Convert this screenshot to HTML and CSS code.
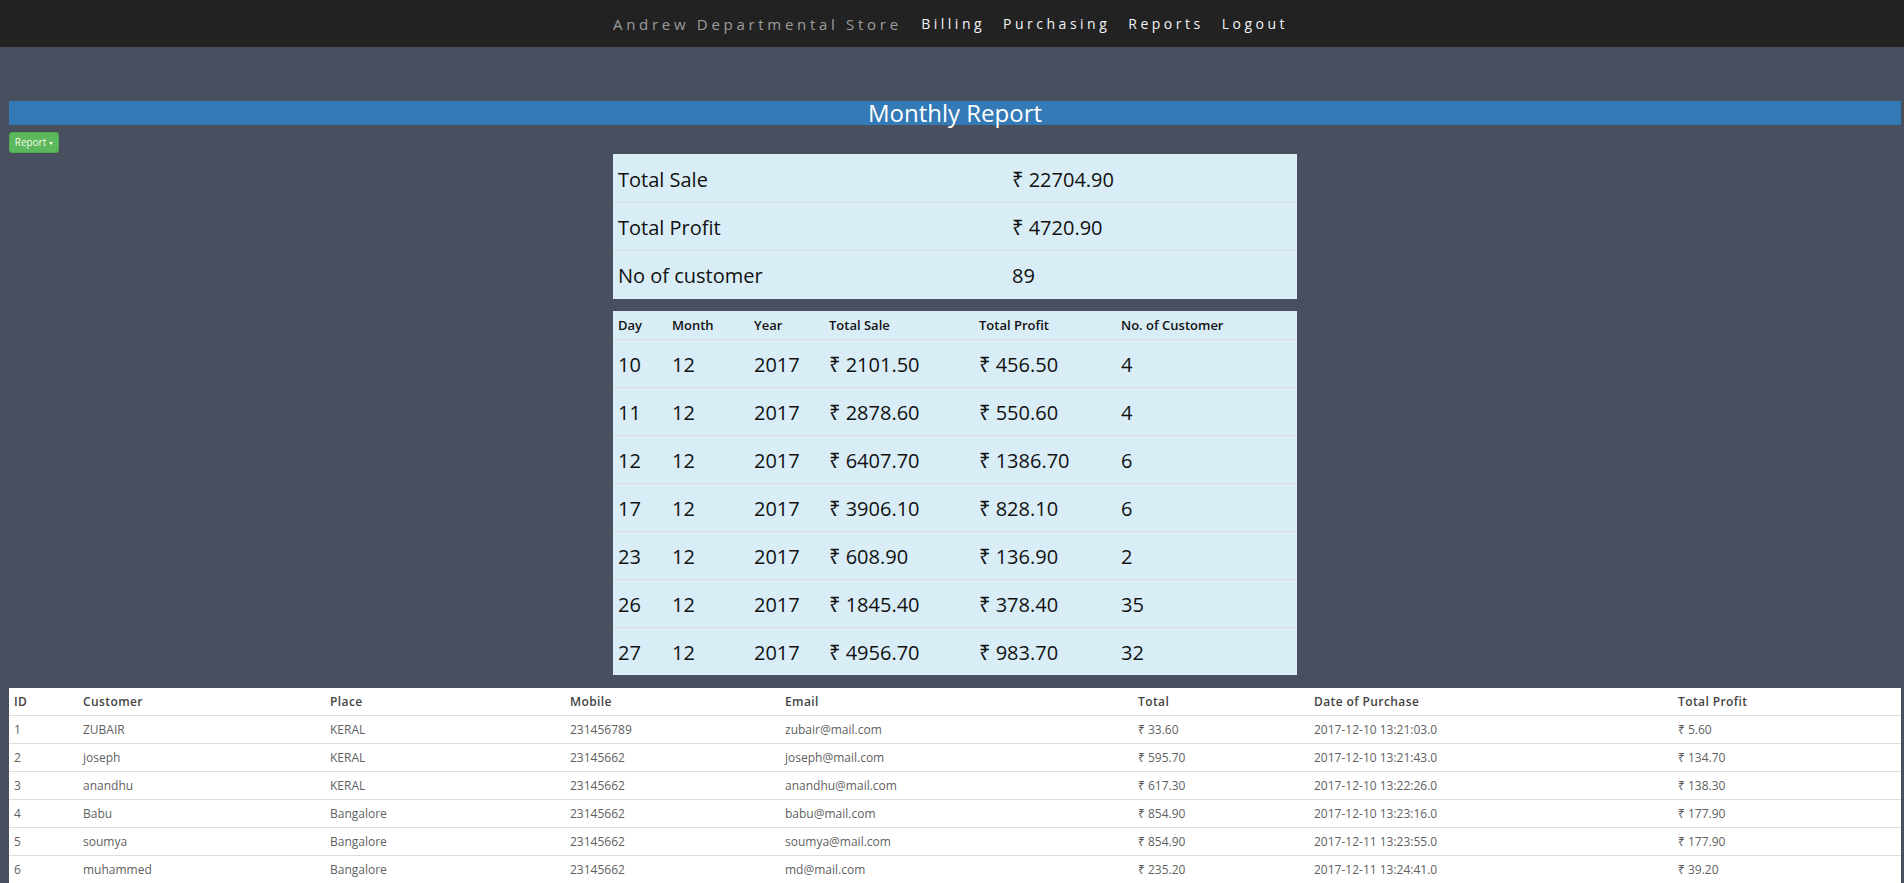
FILE: index.html
```html
<!DOCTYPE html>
<html lang="en">
<head>
<meta charset="utf-8">
<title>Monthly Report</title>
<link rel="stylesheet" href="styles.css">
</head>
<body>
<header class="navbar">
  <div class="nav-inner">
    <span class="brand">Andrew Departmental Store</span>
    <nav class="nav-links">
      <a href="#">Billing</a>
      <a href="#">Purchasing</a>
      <a href="#">Reports</a>
      <a href="#">Logout</a>
    </nav>
  </div>
</header>
<main class="page">
  <h3 class="page-title">Monthly Report</h3>
  <div class="toolbar">
    <button class="btn-report">Report <span class="caret"></span></button>
  </div>
  <table class="info-table summary">
    <tbody>
      <tr><td class="s-label">Total Sale</td><td>₹ 22704.90</td></tr>
      <tr><td class="s-label">Total Profit</td><td>₹ 4720.90</td></tr>
      <tr><td class="s-label">No of customer</td><td>89</td></tr>
    </tbody>
  </table>
  <table class="info-table daily">
    <thead>
      <tr>
        <th class="c-day">Day</th><th class="c-month">Month</th><th class="c-year">Year</th>
        <th class="c-sale">Total Sale</th><th class="c-profit">Total Profit</th><th class="c-cust">No. of Customer</th>
      </tr>
    </thead>
    <tbody>
      <tr><td>10</td><td>12</td><td>2017</td><td>₹ 2101.50</td><td>₹ 456.50</td><td>4</td></tr>
      <tr><td>11</td><td>12</td><td>2017</td><td>₹ 2878.60</td><td>₹ 550.60</td><td>4</td></tr>
      <tr><td>12</td><td>12</td><td>2017</td><td>₹ 6407.70</td><td>₹ 1386.70</td><td>6</td></tr>
      <tr><td>17</td><td>12</td><td>2017</td><td>₹ 3906.10</td><td>₹ 828.10</td><td>6</td></tr>
      <tr><td>23</td><td>12</td><td>2017</td><td>₹ 608.90</td><td>₹ 136.90</td><td>2</td></tr>
      <tr><td>26</td><td>12</td><td>2017</td><td>₹ 1845.40</td><td>₹ 378.40</td><td>35</td></tr>
      <tr><td>27</td><td>12</td><td>2017</td><td>₹ 4956.70</td><td>₹ 983.70</td><td>32</td></tr>
    </tbody>
  </table>
  <table class="customers">
    <thead>
      <tr>
        <th class="k-id">ID</th><th class="k-cust">Customer</th><th class="k-place">Place</th>
        <th class="k-mob">Mobile</th><th class="k-mail">Email</th><th class="k-total">Total</th>
        <th class="k-date">Date of Purchase</th><th class="k-profit">Total Profit</th>
      </tr>
    </thead>
    <tbody>
      <tr><td>1</td><td>ZUBAIR</td><td>KERAL</td><td>231456789</td><td>zubair@mail.com</td><td>₹ 33.60</td><td>2017-12-10 13:21:03.0</td><td>₹ 5.60</td></tr>
      <tr><td>2</td><td>joseph</td><td>KERAL</td><td>23145662</td><td>joseph@mail.com</td><td>₹ 595.70</td><td>2017-12-10 13:21:43.0</td><td>₹ 134.70</td></tr>
      <tr><td>3</td><td>anandhu</td><td>KERAL</td><td>23145662</td><td>anandhu@mail.com</td><td>₹ 617.30</td><td>2017-12-10 13:22:26.0</td><td>₹ 138.30</td></tr>
      <tr><td>4</td><td>Babu</td><td>Bangalore</td><td>23145662</td><td>babu@mail.com</td><td>₹ 854.90</td><td>2017-12-10 13:23:16.0</td><td>₹ 177.90</td></tr>
      <tr><td>5</td><td>soumya</td><td>Bangalore</td><td>23145662</td><td>soumya@mail.com</td><td>₹ 854.90</td><td>2017-12-11 13:23:55.0</td><td>₹ 177.90</td></tr>
      <tr><td>6</td><td>muhammed</td><td>Bangalore</td><td>23145662</td><td>md@mail.com</td><td>₹ 235.20</td><td>2017-12-11 13:24:41.0</td><td>₹ 39.20</td></tr>
    </tbody>
  </table>
</main>
</body>
</html>
```
FILE: styles.css
```css
* { box-sizing: border-box; }

html, body {
  margin: 0;
  padding: 0;
}

body {
  background: #484f5e;
  font-family: "Open Sans", "Noto Sans", "DejaVu Sans", sans-serif;
  color: #111;
}

/* ---------- navbar ---------- */
.navbar {
  height: 47px;
  background: #222222;
  padding: 0 3px 0 9px;
  display: flex;
  justify-content: center;
  align-items: center;
}

.nav-inner {
  width: 684px;
  display: flex;
  align-items: center;
}

.brand {
  color: #9d9d9d;
  font-size: 15px;
  letter-spacing: 3.7px;
  font-weight: 400;
}

.nav-links {
  margin-left: auto;
  display: flex;
}

.nav-links a {
  color: #f2f4f8;
  text-decoration: none;
  font-size: 14px;
  letter-spacing: 3.5px;
  padding: 0 9px;
}

.nav-links a:last-child {
  padding-right: 9px;
}

/* ---------- page ---------- */
.page {
  padding: 0 3px 0 9px;
}

.page-title {
  margin: 54px 0 0;
  height: 24px;
  background: #337ab7;
  color: #ffffff;
  font-size: 24px;
  line-height: 24px;
  font-weight: 400;
  text-align: center;
}

.toolbar {
  margin-top: 7px;
  height: 22px;
  display: flex;
  align-items: flex-start;
}

.btn-report {
  height: 21px;
  width: 50px;
  padding: 0 4px;
  background: #5cb85c;
  border: 1px solid #4cae4c;
  border-radius: 3px;
  color: #f4fbe8;
  font-family: "Open Sans", "DejaVu Sans", sans-serif;
  font-size: 10px;
  line-height: 19px;
  display: flex;
  align-items: center;
  justify-content: center;
  gap: 3px;
}

.caret {
  display: inline-block;
  width: 0;
  height: 0;
  border-left: 2.5px solid transparent;
  border-right: 2.5px solid transparent;
  border-top: 3px solid #f4fbe8;
  margin-top: 2px;
}

/* ---------- info tables ---------- */
.info-table {
  width: 684px;
  margin: 0 auto;
  background: #d9edf7;
  border-collapse: separate;
  border-spacing: 0;
  table-layout: fixed;
}

.info-table td {
  font-size: 20px;
  line-height: 28px;
  padding: 11px 5px 8px;
  border-top: 1px solid #dddddd;
  color: #111;
  white-space: nowrap;
}

.summary tbody tr:first-child td {
  border-top: 0;
  padding-top: 12px;
}

.summary tbody tr:last-child td {
  padding-bottom: 9px;
}

.summary .s-label {
  width: 394px;
}

.daily {
  margin-top: 12px;
}

.daily th {
  font-size: 13px;
  font-weight: 600;
  line-height: 17px;
  padding: 6px 5px 5px;
  text-align: left;
  color: #111;
  white-space: nowrap;
}

.c-day { width: 54px; }
.c-month { width: 82px; }
.c-year { width: 75px; }
.c-sale { width: 150px; }
.c-profit { width: 142px; }
.c-cust { width: 181px; }

/* ---------- customers table ---------- */
.customers {
  width: 100%;
  margin-top: 13px;
  background: #ffffff;
  border-collapse: separate;
  border-spacing: 0;
  table-layout: fixed;
}

.customers th {
  font-size: 12px;
  font-weight: 600;
  line-height: 17px;
  padding: 5px;
  text-align: left;
  color: #444;
  letter-spacing: 0.4px;
}

.customers td {
  font-size: 12px;
  line-height: 17px;
  padding: 5px;
  border-top: 1px solid #dddddd;
  color: #5f5f5f;
  white-space: nowrap;
}

.k-id { width: 69px; }
.k-cust { width: 247px; }
.k-place { width: 240px; }
.k-mob { width: 215px; }
.k-mail { width: 353px; }
.k-total { width: 176px; }
.k-date { width: 364px; }
.k-profit { width: auto; }
```
